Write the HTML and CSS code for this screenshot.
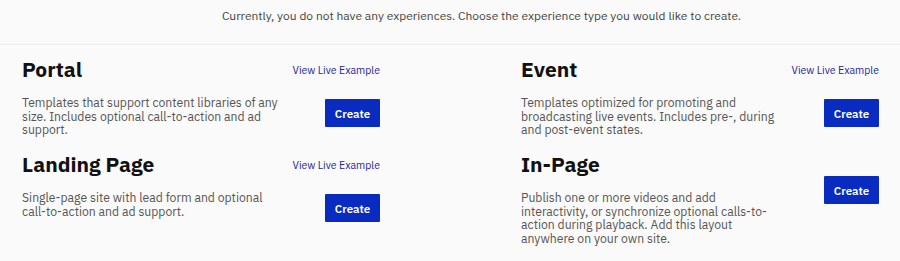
FILE: index.html
```html
<!DOCTYPE html>
<html>
<head>
    <link rel="stylesheet" href="styles.css">
    <title>Experiences</title>
</head>
<body>
    <p class="intro">Currently, you do not have any experiences. Choose the experience type you would like to create.</p>
    <div class="types">
        <div class="card">
            <div class="card-main">
                <h2>Portal</h2>
                <p class="desc">Templates that support content libraries of any size. Includes optional call-to-action and ad support.</p>
            </div>
            <div class="card-side">
                <a class="example" href="#">View Live Example</a>
                <button class="create">Create</button>
            </div>
        </div>
        <div class="card">
            <div class="card-main">
                <h2>Event</h2>
                <p class="desc">Templates optimized for promoting and broadcasting live events. Includes pre-, during and post-event states.</p>
            </div>
            <div class="card-side">
                <a class="example" href="#">View Live Example</a>
                <button class="create">Create</button>
            </div>
        </div>
        <div class="card">
            <div class="card-main">
                <h2>Landing Page</h2>
                <p class="desc">Single-page site with lead form and optional call-to-action and ad support.</p>
            </div>
            <div class="card-side">
                <a class="example" href="#">View Live Example</a>
                <button class="create">Create</button>
            </div>
        </div>
        <div class="card">
            <div class="card-main">
                <h2>In-Page</h2>
                <p class="desc">Publish one or more videos and add interactivity, or synchronize optional calls-to-action during playback. Add this layout anywhere on your own site.</p>
            </div>
            <div class="card-side">
                <button class="create">Create</button>
            </div>
        </div>
    </div>
</body>
</html>
```

FILE: styles.css
```css
body {
    margin: 0;
    background-color: #fafafa;
    font-family: "IBM Plex Sans", Inter, "Noto Sans", sans-serif;
    color: #1a1a1a;
}
.intro {
    margin: 0;
    height: 44px;
    padding: 8px 0 0 63px;
    box-sizing: border-box;
    text-align: center;
    font-size: 12px;
    line-height: 16px;
    color: #444;
}
.types {
    display: grid;
    grid-template-columns: 358px 358px;
    justify-content: space-between;
    row-gap: 15px;
    padding: 10px 21px 40px 22px;
    border-top: 1px solid #ececec;
}
.card {
    display: flex;
    justify-content: space-between;
    height: 80px;
}
.card-main {
    width: 257px;
}
.card h2 {
    margin: 0 0 13px;
    font-size: 21px;
    line-height: 28px;
    font-weight: 700;
    color: #111;
}
.desc {
    margin: 0;
    font-size: 12.2px;
    line-height: 13.5px;
    color: #555;
}
.card-side {
    display: flex;
    flex-direction: column;
    align-items: flex-end;
    justify-content: center;
    gap: 21px;
}
.example {
    font-size: 10.5px;
    line-height: 15px;
    color: #25259a;
    text-decoration: none;
}
.create {
    width: 55px;
    height: 28px;
    padding: 0;
    border: 0;
    border-radius: 1px;
    background-color: #0a2bbf;
    color: #fff;
    font-family: inherit;
    font-size: 11.5px;
    font-weight: 600;
}
```
